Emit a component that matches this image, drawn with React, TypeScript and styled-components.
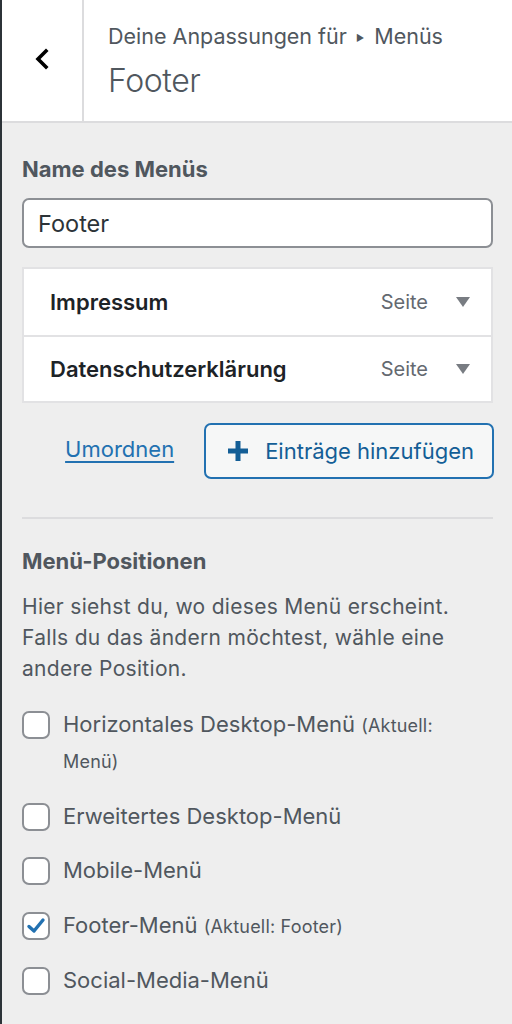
import React from "react";
import styled, { createGlobalStyle } from "styled-components";

const Global = createGlobalStyle`
  html, body { margin: 0; padding: 0; background: #eeeeee; }
  body { font-family: Inter, "Noto Sans", "Liberation Sans", sans-serif; -webkit-font-smoothing: antialiased; }
  * { box-sizing: border-box; }
`;

const Page = styled.div`
  width: 512px;
  min-height: 1024px;
  background: #eeeeee;
  border-left: 2px solid #2c3338;
  display: flex;
  flex-direction: column;
`;

const Header = styled.header`
  height: 123px;
  background: #ffffff;
  border-bottom: 2px solid #dcdcde;
  display: flex;
`;

const BackButton = styled.button`
  width: 82px;
  border: 0;
  border-right: 2px solid #dcdcde;
  background: #ffffff;
  display: flex;
  align-items: center;
  justify-content: center;
  padding: 0 0 4px 0;
  cursor: pointer;
`;

const TitleBlock = styled.div`
  flex: 1;
  padding: 22px 0 0 24px;
  display: flex;
  flex-direction: column;
  color: #50575e;
`;

const Crumb = styled.span`
  font-size: 21.5px;
  line-height: 28px;
`;

const Arrow = styled.span`
  font-size: 9px;
  vertical-align: 3px;
  margin: 0 4px 0 3px;
`;

const PanelTitle = styled.h1`
  margin: 10px 0 0;
  font-size: 32px;
  font-weight: 300;
  line-height: 38px;
  letter-spacing: -0.4px;
`;

const Content = styled.main`
  padding: 32px 19px 24px 20px;
  display: flex;
  flex-direction: column;
`;

const Label = styled.h2`
  margin: 0;
  font-size: 22px;
  font-weight: 700;
  line-height: 28px;
  color: #50575e;
`;

const NameInput = styled.input`
  margin-top: 15px;
  height: 50px;
  width: 100%;
  border: 2px solid #8c8f94;
  border-radius: 7px;
  background: #ffffff;
  padding: 0 14px;
  font: inherit;
  font-size: 23.5px;
  color: #2c3338;
  outline: none;
`;

const ItemList = styled.ul`
  list-style: none;
  margin: 19px 0 0;
  padding: 0;
  background: #ffffff;
  border: 2px solid #e2e2e4;
`;

const Item = styled.li`
  height: 66px;
  display: flex;
  align-items: center;
  padding: 0 21px 0 26px;
  & + & { border-top: 2px solid #e2e2e4; }
`;

const ItemTitle = styled.span`
  flex: 1;
  font-size: 22px;
  font-weight: 600;
  color: #1d2327;
`;

const ItemType = styled.span`
  font-size: 20px;
  color: #646970;
  margin-right: 28px;
`;

const Caret = styled.span`
  width: 0;
  height: 0;
  border-left: 7px solid transparent;
  border-right: 7px solid transparent;
  border-top: 10px solid #787c82;
`;

const Actions = styled.div`
  margin-top: 20px;
  margin-right: -1px;
  display: flex;
  align-items: center;
  justify-content: flex-end;
  gap: 30px;
`;

const ReorderLink = styled.a`
  font-size: 22px;
  color: #2271b1;
  text-decoration: underline;
  text-underline-offset: 4px;
  margin-bottom: 4px;
`;

const AddButton = styled.button`
  height: 56px;
  padding: 0 18px 0 21px;
  border: 2px solid #2271b1;
  border-radius: 7px;
  background: #f6f7f7;
  display: flex;
  align-items: center;
  gap: 16px;
  font: inherit;
  font-size: 22px;
  color: #135e96;
  cursor: pointer;
`;

const Divider = styled.hr`
  margin: 38px 0 0;
  border: 0;
  border-top: 2px solid #dcdcde;
`;

const SectionTitle = styled(Label)`
  margin-top: 28px;
`;

const Description = styled.p`
  margin: 16px 0 0;
  font-size: 21px;
  line-height: 31px;
  letter-spacing: 0.3px;
  color: #50575e;
`;

const Options = styled.div`
  margin-top: 23px;
  display: flex;
  flex-direction: column;
  gap: 19.5px;
`;

const Option = styled.label`
  display: flex;
  align-items: flex-start;
  gap: 13px;
  font-size: 22px;
  line-height: 35px;
  color: #50575e;
`;

const Box = styled.span<{ $checked?: boolean }>`
  flex: none;
  margin-top: 4px;
  width: 28px;
  height: 28px;
  border: 2px solid #8c8f94;
  border-radius: 7px;
  background: #ffffff;
  display: flex;
  align-items: center;
  justify-content: center;
`;

const Hint = styled.span`
  font-size: 18px;
  letter-spacing: 0.2px;
`;

const Chevron = () => (
  <svg width="18" height="22" viewBox="0 0 18 22" aria-hidden>
    <path d="M13 3 L5 11 L13 19" fill="none" stroke="#000" strokeWidth="3.6" strokeLinecap="square" strokeLinejoin="miter" />
  </svg>
);

const Plus = () => (
  <svg width="22" height="22" viewBox="0 0 22 22" aria-hidden>
    <path d="M11 1 V21 M1 11 H21" stroke="#135e96" strokeWidth="5" />
  </svg>
);

const Check = () => (
  <svg width="20" height="20" viewBox="0 0 20 20" aria-hidden>
    <path d="M3 10.5 L8 15 L17 4" fill="none" stroke="#2271b1" strokeWidth="3.4" strokeLinecap="round" strokeLinejoin="round" />
  </svg>
);

const items = [
  { title: "Impressum", type: "Seite" },
  { title: "Datenschutzerklärung", type: "Seite" },
];

const positions: { label: string; hint?: React.ReactNode; checked?: boolean }[] = [
  { label: "Horizontales Desktop-Menü", hint: <>(Aktuell:<br />Menü)</> },
  { label: "Erweitertes Desktop-Menü" },
  { label: "Mobile-Menü" },
  { label: "Footer-Menü", hint: "(Aktuell: Footer)", checked: true },
  { label: "Social-Media-Menü" },
];

export default function App() {
  return (
    <>
      <Global />
      <Page>
        <Header>
          <BackButton aria-label="Zurück">
            <Chevron />
          </BackButton>
          <TitleBlock>
            <Crumb>
              Deine Anpassungen für <Arrow>▶</Arrow> Menüs
            </Crumb>
            <PanelTitle>Footer</PanelTitle>
          </TitleBlock>
        </Header>
        <Content>
          <Label>Name des Menüs</Label>
          <NameInput defaultValue="Footer" />
          <ItemList>
            {items.map((it) => (
              <Item key={it.title}>
                <ItemTitle>{it.title}</ItemTitle>
                <ItemType>{it.type}</ItemType>
                <Caret />
              </Item>
            ))}
          </ItemList>
          <Actions>
            <ReorderLink href="#">Umordnen</ReorderLink>
            <AddButton>
              <Plus />
              Einträge hinzufügen
            </AddButton>
          </Actions>
          <Divider />
          <SectionTitle>Menü-Positionen</SectionTitle>
          <Description>
            Hier siehst du, wo dieses Menü erscheint.
            <br />
            Falls du das ändern möchtest, wähle eine
            <br />
            andere Position.
          </Description>
          <Options>
            {positions.map((p) => (
              <Option key={p.label}>
                <Box $checked={p.checked}>{p.checked && <Check />}</Box>
                <span>
                  {p.label}
                  {p.hint && <> <Hint>{p.hint}</Hint></>}
                </span>
              </Option>
            ))}
          </Options>
        </Content>
      </Page>
    </>
  );
}
